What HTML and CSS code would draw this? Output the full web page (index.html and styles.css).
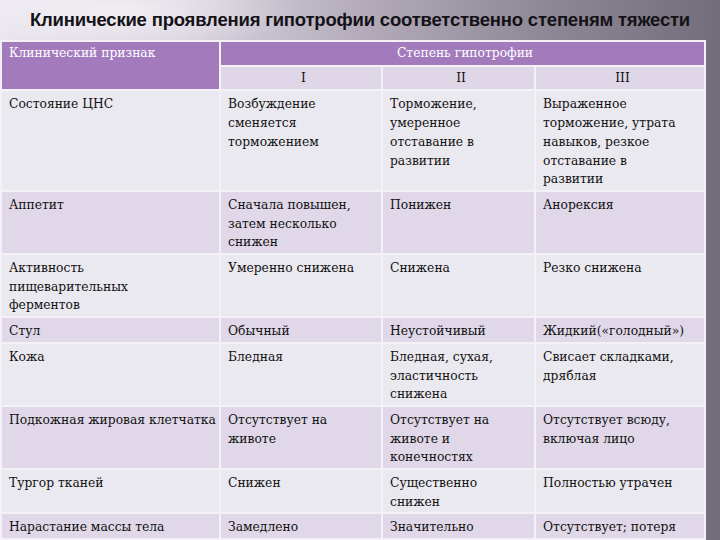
FILE: index.html
```html
<!DOCTYPE html>
<html lang="ru">
<head>
<meta charset="utf-8">
<link rel="stylesheet" href="styles.css">
</head>
<body>
<div class="slide">
  <h1 class="title">Клинические проявления гипотрофии соответственно степеням тяжести</h1>
  <table class="grid">
    <colgroup>
      <col class="c1"><col class="c2"><col class="c3"><col class="c4">
    </colgroup>
    <thead>
      <tr class="h1row">
        <th class="hcell left" rowspan="2">Клинический признак</th>
        <th class="hcell center" colspan="3">Степень гипотрофии</th>
      </tr>
      <tr class="h2row">
        <th class="sub">I</th>
        <th class="sub">II</th>
        <th class="sub">III</th>
      </tr>
    </thead>
    <tbody>
      <tr class="light">
        <td>Состояние ЦНС</td>
        <td>Возбуждение<br>сменяется<br>торможением</td>
        <td>Торможение,<br>умеренное<br>отставание в<br>развитии</td>
        <td>Выраженное<br>торможение, утрата<br>навыков, резкое<br>отставание в<br>развитии</td>
      </tr>
      <tr class="dark">
        <td>Аппетит</td>
        <td>Сначала повышен,<br>затем несколько<br>снижен</td>
        <td>Понижен</td>
        <td>Анорексия</td>
      </tr>
      <tr class="light">
        <td>Активность<br>пищеварительных<br>ферментов</td>
        <td>Умеренно снижена</td>
        <td>Снижена</td>
        <td>Резко снижена</td>
      </tr>
      <tr class="dark">
        <td>Стул</td>
        <td>Обычный</td>
        <td>Неустойчивый</td>
        <td>Жидкий(«голодный»)</td>
      </tr>
      <tr class="light">
        <td>Кожа</td>
        <td>Бледная</td>
        <td>Бледная, сухая,<br>эластичность<br>снижена</td>
        <td>Свисает складками,<br>дряблая</td>
      </tr>
      <tr class="dark">
        <td>Подкожная жировая клетчатка</td>
        <td>Отсутствует на<br>животе</td>
        <td>Отсутствует на<br>животе и<br>конечностях</td>
        <td>Отсутствует всюду,<br>включая лицо</td>
      </tr>
      <tr class="light">
        <td>Тургор тканей</td>
        <td>Снижен</td>
        <td>Существенно<br>снижен</td>
        <td>Полностью утрачен</td>
      </tr>
      <tr class="dark">
        <td>Нарастание массы тела</td>
        <td>Замедлено</td>
        <td>Значительно</td>
        <td>Отсутствует; потеря</td>
      </tr>
    </tbody>
  </table>
</div>
</body>
</html>
```

FILE: styles.css
```css
html, body {
  margin: 0;
  padding: 0;
}
body {
  width: 720px;
  height: 540px;
  overflow: hidden;
}
.slide {
  width: 720px;
  height: 540px;
  overflow: hidden;
  background:
    radial-gradient(ellipse 260px 60px at 120px 10px, rgba(255,255,255,0.55), rgba(255,255,255,0) 70%),
    linear-gradient(to right, #e9e5ee 0%, #d9d3df 25%, #b4acba 50%, #8f8897 75%, #736d7b 100%);
}
.title {
  margin: 0;
  height: 40px;
  box-sizing: border-box;
  padding-top: 10px;
  text-align: center;
  font-family: "Liberation Sans", Arial, sans-serif;
  font-weight: bold;
  font-size: 18.5px;
  line-height: 20px;
  color: #141216;
  letter-spacing: -0.2px;
}
.grid {
  width: 704px;
  table-layout: fixed;
  border-collapse: collapse;
  font-family: "DejaVu Serif", serif;
  font-size: 12.3px;
  line-height: 18.7px;
  color: #111;
}
.c1 { width: 219px; }
.c2 { width: 162px; }
.c3 { width: 153px; }
.c4 { width: 170px; }
.grid th, .grid td {
  border: 2px solid #f3f1f6;
  vertical-align: top;
  text-align: left;
  padding: 4px 2px 1px 7px;
  font-weight: normal;
  white-space: nowrap;
  overflow: hidden;
}
.grid th {
  padding-top: 2px;
  padding-bottom: 2px;
}
.hcell {
  background: #a37bbd;
  color: #fff;
}
.hcell.center { text-align: center; }
.sub {
  background: #dfd7e7;
  text-align: center !important;
}
.light td { background: #ebe9f0; }
.dark td { background: #e0d8e8; }
```
